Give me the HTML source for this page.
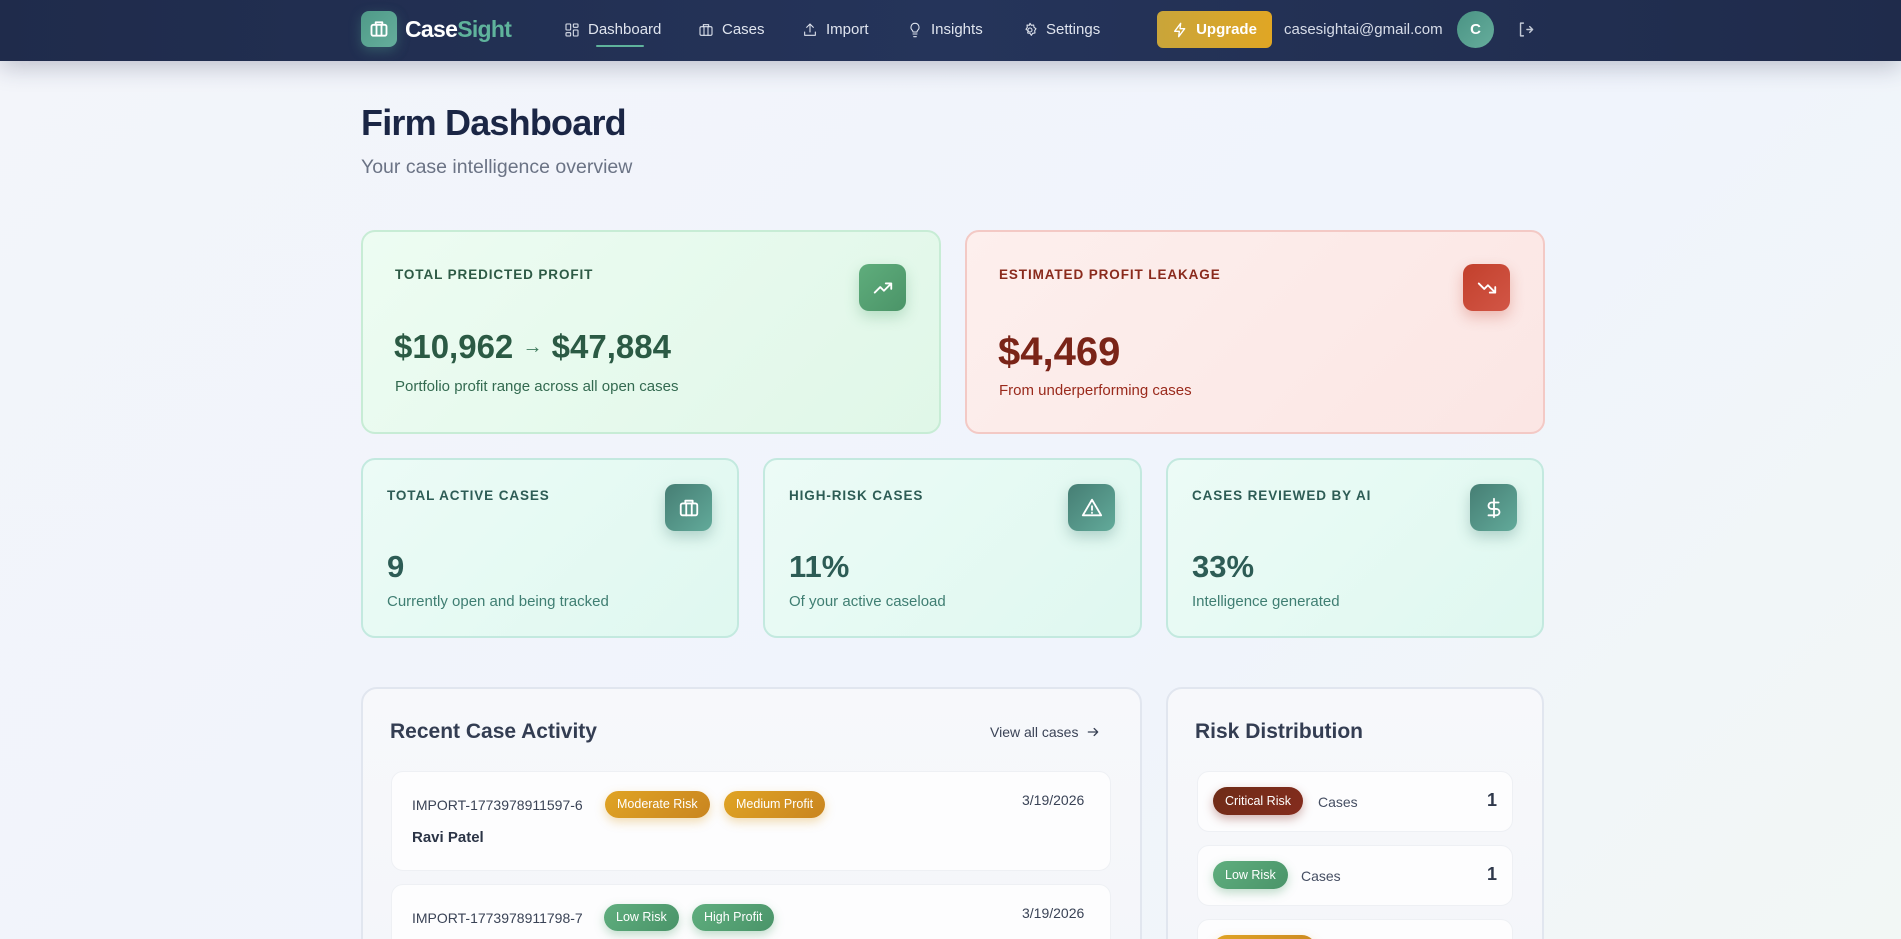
<!DOCTYPE html>
<html style="width:1901px;height:939px;overflow:hidden"><head><meta charset="utf-8"><style>
*{box-sizing:border-box;margin:0;padding:0}
body{width:1901px;height:939px;overflow:hidden;font-family:"Liberation Sans",sans-serif;background:linear-gradient(135deg,#f3f5fa 0%,#f0f4fc 60%,#f2f7f5 100%);color:#1e2a44}
#wrap{position:relative;width:1901px;height:939px;overflow:hidden}
.abs{position:absolute}
.hdr{left:0;top:0;width:1901px;height:61px;background:linear-gradient(90deg,#1f2b4b,#25345a 50%,#1f2b4b);box-shadow:0 6px 24px rgba(30,40,70,.25)}
.nav{color:#dfe4ee;font-size:15px;top:21px;display:flex;align-items:center;gap:8px}
.nav svg{width:16px;height:16px;stroke:#dfe4ee;fill:none;stroke-width:1.6;stroke-linecap:round;stroke-linejoin:round}
.card{border-radius:14px}
.lbl{font-size:13.5px;letter-spacing:0.9px;font-weight:bold}
.ico{width:47px;height:47px;border-radius:10px;display:flex;align-items:center;justify-content:center}
.ico svg{width:22px;height:22px;fill:none;stroke:#fff;stroke-width:2;stroke-linecap:round;stroke-linejoin:round}
.g{background:linear-gradient(135deg,#edfcf2,#e0f7e8);border:2px solid #c7ecd5}
.r{background:linear-gradient(135deg,#fdefed,#fbe6e4);border:2px solid #f3c9c5}
.t{background:linear-gradient(135deg,#ecfbf6,#dff8f0);border:2px solid #c3e9df}
.tico{background:linear-gradient(135deg,#467e74,#62aa9a);box-shadow:0 6px 14px rgba(60,120,110,.3)}
.panel{background:linear-gradient(180deg,#f7f8fb,#f3f5f9);border:2px solid #e1e6ef;border-radius:16px}
.item{background:#fdfdfe;border:1px solid #eef0f4;border-radius:12px}
.badge{display:inline-block;color:#fff;font-size:12.5px;height:27px;line-height:27px;padding:0 12px;border-radius:14px}
.amber{background:linear-gradient(135deg,#e0a424,#c98520);box-shadow:0 4px 10px rgba(220,160,40,.35)}
.green{background:linear-gradient(135deg,#5fae7e,#4a9469);box-shadow:0 4px 10px rgba(80,160,110,.35)}
.crit{background:linear-gradient(135deg,#6e2c17,#852c1e);box-shadow:0 4px 10px rgba(130,40,30,.35)}
</style></head><body><div id="wrap">
<div class="abs hdr"></div>
<div class="abs" style="left:361px;top:11px;width:36px;height:36px;border-radius:8px;background:linear-gradient(135deg,#4f9a88,#65ae9c);display:flex;align-items:center;justify-content:center;box-shadow:0 4px 12px rgba(80,160,140,.35)">
<svg width="20" height="20" viewBox="0 0 24 24" fill="none" stroke="#fff" stroke-width="2.2" stroke-linejoin="round"><rect x="3" y="7" width="18" height="13" rx="2"/><path d="M8 7V4h8v3M9 7v13M15 7v13"/></svg></div>
<div class="abs" style="left:405px;top:16px;font-size:23px;font-weight:bold;color:#fff;letter-spacing:-0.7px">Case<span style="color:#5fb39c">Sight</span></div>
<div class="abs nav" style="left:564px"><svg viewBox="0 0 24 24"><rect x="3" y="3" width="7" height="9" rx="1"/><rect x="14" y="3" width="7" height="5" rx="1"/><rect x="14" y="12" width="7" height="9" rx="1"/><rect x="3" y="16" width="7" height="5" rx="1"/></svg>Dashboard</div>
<div class="abs" style="left:596px;top:45px;width:48px;height:2px;background:#5fb39c;border-radius:1px"></div>
<div class="abs nav" style="left:698px"><svg viewBox="0 0 24 24"><rect x="3" y="7" width="18" height="13" rx="2"/><path d="M8 7V4h8v3M9 7v13M15 7v13"/></svg>Cases</div>
<div class="abs nav" style="left:802px"><svg viewBox="0 0 24 24"><path d="M12 15V3M7 8l5-5 5 5M4 15v5h16v-5"/></svg>Import</div>
<div class="abs nav" style="left:907px"><svg viewBox="0 0 24 24"><path d="M9 18h6M10 22h4M12 2a6 6 0 0 0-4 10.5c.8.8 1 1.5 1 2.5h6c0-1 .2-1.7 1-2.5A6 6 0 0 0 12 2z"/></svg>Insights</div>
<div class="abs nav" style="left:1022px"><svg viewBox="0 0 24 24"><circle cx="12" cy="12" r="3"/><path d="M12 2l2 3 3.5-.5.5 3.5 3 2-2 3 .5 3.5-3.5.5-2 3-2-3-3.5-.5.5-3.5-3-2 2-3-.5-3.5 3.5.5z"/></svg>Settings</div>
<div class="abs" style="left:1157px;top:11px;width:115px;height:37px;border-radius:6px;background:linear-gradient(90deg,#c9a53a,#e0a624);color:#fff;font-weight:bold;font-size:15px;display:flex;align-items:center;justify-content:center;gap:8px">
<svg width="16" height="16" viewBox="0 0 24 24" fill="none" stroke="#fff" stroke-width="2" stroke-linejoin="round"><path d="M13 2L4 14h7l-1 8 9-12h-7z"/></svg>Upgrade</div>
<div class="abs" style="left:1284px;top:21px;font-size:15px;color:#d7dce8">casesightai@gmail.com</div>
<div class="abs" style="left:1457px;top:11px;width:37px;height:37px;border-radius:50%;background:linear-gradient(135deg,#4a9384,#66ad9c);color:#fff;font-weight:bold;font-size:15px;display:flex;align-items:center;justify-content:center">C</div>
<svg class="abs" style="left:1517px;top:21px" width="17" height="17" viewBox="0 0 24 24" fill="none" stroke="#c3c9d6" stroke-width="2" stroke-linecap="round" stroke-linejoin="round"><path d="M9 3H5v18h4M14 12h8M18 8l4 4-4 4"/></svg>

<div class="abs" style="left:361px;top:102px;font-size:36px;font-weight:bold;color:#1b2645;letter-spacing:-0.8px">Firm Dashboard</div>
<div class="abs" style="left:361px;top:156px;font-size:19.5px;color:#6b7385">Your case intelligence overview</div>

<div class="abs card g" style="left:361px;top:230px;width:580px;height:204px"></div>
<div class="abs lbl" style="left:395px;top:267px;color:#2d5a45">TOTAL PREDICTED PROFIT</div>
<div class="abs ico" style="left:859px;top:264px;background:linear-gradient(135deg,#5fad7c,#4b9468);box-shadow:0 6px 14px rgba(80,160,110,.3)"><svg viewBox="0 0 24 24"><path d="M3 17l6-6 4 4 8-8M15 7h6v6"/></svg></div>
<div class="abs" style="left:394px;top:328px;font-size:33px;font-weight:bold;color:#2b5a44">$10,962 <span style="font-weight:normal;font-size:20px;color:#3e7a5c;vertical-align:5px">→</span> $47,884</div>
<div class="abs" style="left:395px;top:378px;font-size:15px;color:#336a50">Portfolio profit range across all open cases</div>

<div class="abs card r" style="left:965px;top:230px;width:580px;height:204px"></div>
<div class="abs lbl" style="left:999px;top:267px;color:#8a2a1c">ESTIMATED PROFIT LEAKAGE</div>
<div class="abs ico" style="left:1463px;top:264px;background:linear-gradient(135deg,#c2402c,#d25646);box-shadow:0 6px 14px rgba(200,70,50,.3)"><svg viewBox="0 0 24 24"><path d="M3 7l6 6 4-4 8 8M15 17h6v-6"/></svg></div>
<div class="abs" style="left:998px;top:330px;font-size:40px;font-weight:bold;color:#7a2418">$4,469</div>
<div class="abs" style="left:999px;top:382px;font-size:15px;color:#9a2a1c">From underperforming cases</div>

<div class="abs card t" style="left:361px;top:458px;width:378px;height:180px"></div>
<div class="abs lbl" style="left:387px;top:488px;color:#2d5c55">TOTAL ACTIVE CASES</div>
<div class="abs ico tico" style="left:665px;top:484px"><svg viewBox="0 0 24 24"><rect x="3" y="7" width="18" height="13" rx="2"/><path d="M8 7V4h8v3M9 7v13M15 7v13"/></svg></div>
<div class="abs" style="left:387px;top:549px;font-size:31px;font-weight:bold;color:#2d5c55">9</div>
<div class="abs" style="left:387px;top:593px;font-size:15px;color:#3f7e72">Currently open and being tracked</div>

<div class="abs card t" style="left:763px;top:458px;width:379px;height:180px"></div>
<div class="abs lbl" style="left:789px;top:488px;color:#2d5c55">HIGH-RISK CASES</div>
<div class="abs ico tico" style="left:1068px;top:484px"><svg viewBox="0 0 24 24"><path d="M12 3L2 20h20zM12 10v4M12 17v.5"/></svg></div>
<div class="abs" style="left:789px;top:549px;font-size:31px;font-weight:bold;color:#2d5c55">11%</div>
<div class="abs" style="left:789px;top:593px;font-size:15px;color:#3f7e72">Of your active caseload</div>

<div class="abs card t" style="left:1166px;top:458px;width:378px;height:180px"></div>
<div class="abs lbl" style="left:1192px;top:488px;color:#2d5c55">CASES REVIEWED BY AI</div>
<div class="abs ico tico" style="left:1470px;top:484px"><svg viewBox="0 0 24 24"><path d="M12 2v20M17 6H9.5a3.5 3.5 0 0 0 0 7h5a3.5 3.5 0 0 1 0 7H6"/></svg></div>
<div class="abs" style="left:1192px;top:549px;font-size:31px;font-weight:bold;color:#2d5c55">33%</div>
<div class="abs" style="left:1192px;top:593px;font-size:15px;color:#3f7e72">Intelligence generated</div>

<div class="abs panel" style="left:361px;top:687px;width:781px;height:400px"></div>
<div class="abs" style="left:390px;top:720px;font-size:21px;font-weight:bold;color:#333d52">Recent Case Activity</div>
<div class="abs" style="left:990px;top:724px;font-size:14px;color:#3a4356;display:flex;align-items:center;gap:8px">View all cases <svg width="14" height="14" viewBox="0 0 24 24" fill="none" stroke="#3a4356" stroke-width="2.2" stroke-linecap="round" stroke-linejoin="round"><path d="M4 12h16M14 6l6 6-6 6"/></svg></div>
<div class="abs item" style="left:391px;top:771px;width:720px;height:100px"></div>
<div class="abs" style="left:412px;top:797px;font-size:14px;color:#3a4356">IMPORT-1773978911597-6</div>
<div class="abs badge amber" style="left:605px;top:791px">Moderate Risk</div>
<div class="abs badge amber" style="left:724px;top:791px">Medium Profit</div>
<div class="abs" style="left:1022px;top:792px;font-size:14px;color:#3a4356">3/19/2026</div>
<div class="abs" style="left:412px;top:829px;font-size:15px;font-weight:bold;color:#2b3446">Ravi Patel</div>
<div class="abs item" style="left:391px;top:884px;width:720px;height:100px"></div>
<div class="abs" style="left:412px;top:910px;font-size:14px;color:#3a4356">IMPORT-1773978911798-7</div>
<div class="abs badge green" style="left:604px;top:904px">Low Risk</div>
<div class="abs badge green" style="left:692px;top:904px">High Profit</div>
<div class="abs" style="left:1022px;top:905px;font-size:14px;color:#3a4356">3/19/2026</div>

<div class="abs panel" style="left:1166px;top:687px;width:378px;height:400px"></div>
<div class="abs" style="left:1195px;top:720px;font-size:21px;font-weight:bold;color:#333d52">Risk Distribution</div>
<div class="abs item" style="left:1197px;top:771px;width:316px;height:61px"></div>
<div class="abs badge crit" style="left:1213px;top:787px;height:28px;line-height:28px">Critical Risk</div>
<div class="abs" style="left:1318px;top:794px;font-size:14px;color:#454e62">Cases</div>
<div class="abs" style="left:1487px;top:790px;font-size:18px;font-weight:bold;color:#2f384b">1</div>
<div class="abs item" style="left:1197px;top:845px;width:316px;height:61px"></div>
<div class="abs badge green" style="left:1213px;top:861px;height:28px;line-height:28px">Low Risk</div>
<div class="abs" style="left:1301px;top:868px;font-size:14px;color:#454e62">Cases</div>
<div class="abs" style="left:1487px;top:864px;font-size:18px;font-weight:bold;color:#2f384b">1</div>
<div class="abs item" style="left:1197px;top:919px;width:316px;height:61px"></div>
<div class="abs badge amber" style="left:1213px;top:935px;width:103px;height:28px"></div>
</div></body></html>
